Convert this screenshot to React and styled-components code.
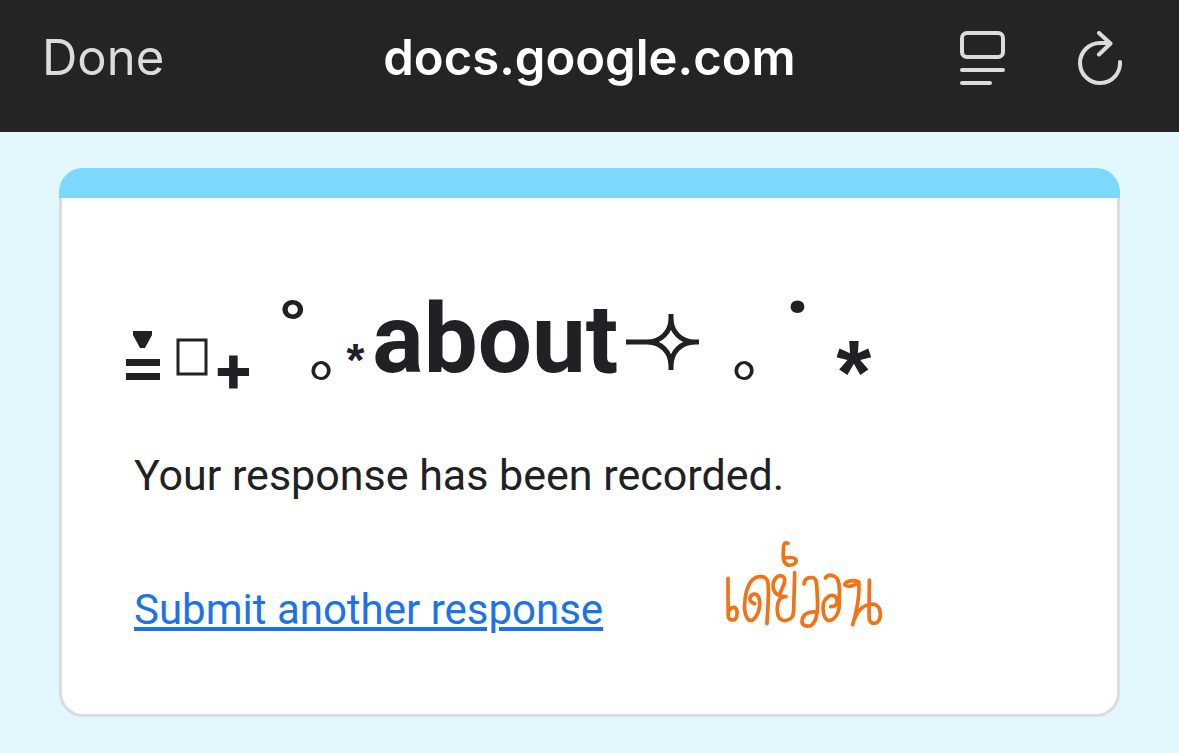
import React from 'react';
import styled, { createGlobalStyle } from 'styled-components';

const GlobalStyle = createGlobalStyle`
    * {
        box-sizing: border-box;
    }

    body {
        margin: 0;
        background: #e3f7ff;
        font-family: Roboto, 'Noto Sans', sans-serif;
        color: #202124;
    }
`;

const Toolbar = styled.header`
    display: grid;
    grid-template-columns: 1fr auto 1fr;
    align-items: center;
    height: 132px;
    padding: 0 42px 16px;
    background: #242424;
    font-family: Inter, 'Liberation Sans', sans-serif;
`;

const TextButton = styled.button`
    justify-self: start;
    padding: 0;
    border: 0;
    background: none;
    color: #dcdcdc;
    font: inherit;
    font-size: 49px;
    line-height: 60px;
    cursor: pointer;
`;

const Address = styled.span`
    color: #fff;
    font-size: 49px;
    font-weight: 600;
    line-height: 60px;
`;

const Actions = styled.div`
    display: flex;
    justify-content: flex-end;
    gap: 73px;
    padding-right: 15px;
`;

const IconButton = styled.button`
    display: flex;
    padding: 0;
    border: 0;
    background: none;
    color: #dcdcdc;
    cursor: pointer;
`;

const LineIcon = styled.svg`
    fill: none;
    stroke: currentColor;
    stroke-width: 4;
    stroke-linecap: round;
    stroke-linejoin: round;
`;

const Card = styled.main`
    margin: 36px 59px;
`;

const Strip = styled.div`
    height: 30px;
    border-radius: 24px 24px 0 0;
    background: #7dd8ff;
`;

const Content = styled.div`
    border: 3px solid #dadce0;
    border-top: 0;
    border-radius: 0 0 24px 24px;
    padding: 81px 64px 74px;
    background: #fff;
`;

const Title = styled.h1`
    margin: 0;
    font-size: 96px;
    font-weight: 700;
    line-height: 120px;
    white-space: nowrap;
`;

const Ornament = styled.svg`
    margin: 0 6px 0 0;
    vertical-align: -8px;
    fill: currentColor;
`;

const Star = styled.svg`
    margin: 0 8px;
    vertical-align: baseline;
    fill: none;
    stroke: currentColor;
    stroke-width: 5;
`;

const Ring = styled.span`
    font-size: 72px;
    font-weight: 500;
    line-height: 0;
    vertical-align: -3px;
`;

const Asterisk = styled.span`
    padding: 0 8px 0 2px;
    font-family: 'Liberation Sans', Arial, sans-serif;
    font-size: ${props => (props.$large ? 90 : 46)}px;
    line-height: 0;
    vertical-align: ${props => (props.$large ? -32 : -4)}px;
`;

const Message = styled.p`
    margin: 46px 8px 33px;
    font-size: 43px;
    line-height: 60px;
`;

const Footer = styled.div`
    display: flex;
    align-items: flex-end;
    gap: 117px;
    padding: 0 8px;
`;

const Link = styled.a`
    color: #1a73e8;
    font-size: 42px;
    line-height: 60px;
`;

const Handwriting = styled.svg`
    flex: none;
    fill: none;
    stroke: #f47216;
    stroke-width: 11;
    stroke-linecap: round;
    stroke-linejoin: round;
`;

const ReaderIcon = () => (
    <LineIcon width="45" height="54" viewBox="0 0 45 54">
        <rect x="2" y="2" width="41" height="24" rx="5" />
        <path d="M2 39H43M2 52H30" />
    </LineIcon>
);

const ReloadIcon = () => (
    <LineIcon width="44" height="54" viewBox="0 0 44 54">
        <path d="M42 31A20 20 0 1 1 22 12H31" />
        <path d="M21 2L32.500 12.500L21 23.500" />
    </LineIcon>
);

const Signature = () => (
    <Handwriting width="164" height="102" viewBox="0 0 492 306" role="img" aria-label="เดย์วอน">
        <path d="M24 121C24 160 24 200 25 238C32 250 46 248 50 236C54 222 50 210 42 208C34 208 28 214 25 222" />
        <path d="M104 197C96 194 88 190 90 180C94 165 110 165 116 178C124 200 116 232 98 246C84 252 76 236 74 215C72 175 82 130 108 118C130 112 142 118 144 135C148 180 142 220 141 257" />
        <path d="M180 166C186 150 200 130 192 118C182 106 164 116 160 135C156 158 166 174 198 176C178 174 170 195 172 220C174 244 186 250 200 247C216 243 220 236 221 215C222 180 223 140 224 104" />
        <path d="M204 16C190 10 190 24 190 40C188 60 192 78 206 82C222 82 230 74 228 66C224 56 206 58 194 60" />
        <g transform="translate(234 78)">
            <path d="M18 60C20 42 34 38 48 42C58 48 56 70 58 100C60 130 58 170 40 184C26 190 10 184 12 170C14 148 34 142 56 144" />
            <path d="M82 42C90 30 104 32 114 40C128 52 124 90 124 120C124 150 108 170 92 170C78 166 72 140 76 120C82 100 96 90 110 96C124 108 118 128 98 128" />
            <path d="M182 54C168 68 146 70 140 62C142 50 170 46 182 54C186 90 176 140 164 182C172 150 190 124 220 120C240 120 250 134 246 162C240 182 220 182 214 168C212 140 214 90 214 48" />
        </g>
    </Handwriting>
);

const App = () => (
    <React.Fragment>
        <GlobalStyle />
        <Toolbar>
            <TextButton type="button">Done</TextButton>
            <Address>docs.google.com</Address>
            <Actions>
                <IconButton type="button" aria-label="Reader view">
                    <ReaderIcon />
                </IconButton>
                <IconButton type="button" aria-label="Reload">
                    <ReloadIcon />
                </IconButton>
            </Actions>
        </Toolbar>
        <Card>
            <Strip />
            <Content>
                <Title>
                    <Ornament width="82" height="50" viewBox="0 0 82 50" aria-hidden="true">
                        <path d="M7 1H26V5L19 18H14L7 5ZM0 29H34V36H0ZM0 43H34V50H0Z" />
                        <path d="M52 10H80V44H52Z" fill="none" stroke="currentColor" strokeWidth="3" />
                    </Ornament>
                    ₊ ˚
                    <Ring>｡</Ring>
                    <Asterisk>*</Asterisk>
                    about
                    <Star width="73" height="58" viewBox="0 0 73 58" aria-hidden="true">
                        <path d="M0 28H22M45 0V4C45 18 55 28 69 28H73H69C55 28 45 38 45 52V56V52C45 38 35 28 21 28C35 28 45 18 45 4" />
                    </Star>
                    {' '}
                    <Ring>{'｡ '}</Ring>
                    {'˙ '}
                    <Asterisk $large>*</Asterisk>
                </Title>
                <Message>Your response has been recorded.</Message>
                <Footer>
                    <Link href="#form">Submit another response</Link>
                    <Signature />
                </Footer>
            </Content>
        </Card>
    </React.Fragment>
);

export default App;
